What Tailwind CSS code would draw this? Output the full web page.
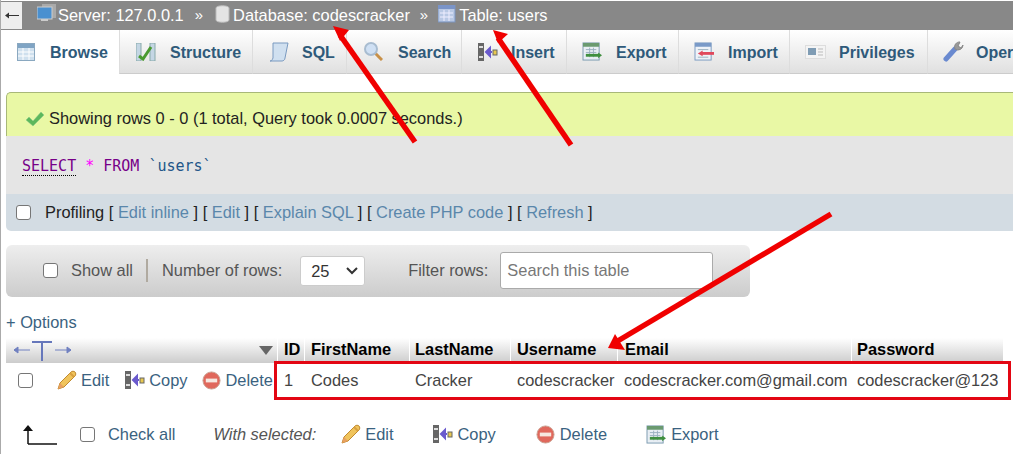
<!DOCTYPE html>
<html lang="en">
<head>
    <meta charset="UTF-8">
    <title>phpMyAdmin - users</title>
    <script src="https://cdn.jsdelivr.net/npm/@tailwindcss/browser@4"></script>
</head>
<body class="bg-white">
    <!-- shared icons -->
    <svg class="hidden">
        <symbol id="i-edit" viewBox="0 0 20 20"><path d="M1 19l2-6L14 2c1-1 3-1 4 0s1 3 0 4L7 17z" fill="#f0c45c" stroke="#c08a30"/><path d="M1 19l2-6 4 4z" fill="#e8a060"/><path d="M13 3l4 4" stroke="#d8a040" stroke-width="2"/></symbol>
        <symbol id="i-copy" viewBox="0 0 20 20"><rect x="0" y="1" width="6" height="18" fill="#666"/><rect x="1" y="4" width="4" height="2" fill="#ddd"/><rect x="1" y="14" width="4" height="2" fill="#ddd"/><path d="M14 10H8M8 10l4-4v8z" fill="#6a5acd" stroke="#6a5acd" stroke-width="2"/><rect x="15" y="8" width="4" height="5" fill="#e8c850" stroke="#666"/></symbol>
        <symbol id="i-del" viewBox="0 0 20 20"><circle cx="10" cy="10" r="9" fill="#e0685c" stroke="#c9a090"/><rect x="4" y="8" width="12" height="4" fill="#f6e8e0"/></symbol>
        <symbol id="i-export" viewBox="0 0 22 20"><rect x="1" y="1" width="17" height="18" fill="#e8eef4" stroke="#7a9ab0"/><rect x="1" y="1" width="17" height="4" fill="#6a9a70"/><path d="M4 8h11M4 11h11M8 6v10M12 6v10" stroke="#9ab0c0"/><path d="M4 14h14" stroke="#3f8f3f" stroke-width="3"/><path d="M17 11l4 3-4 3z" fill="#3f8f3f"/></symbol>
        <symbol id="i-import" viewBox="0 0 22 20"><rect x="1" y="1" width="17" height="18" fill="#eef2f8" stroke="#7a9ac0"/><rect x="1" y="1" width="17" height="4" fill="#7a9ac8"/><path d="M4 8h11M4 16h11" stroke="#9ab0c0"/><path d="M8 12h13" stroke="#e0485c" stroke-width="3"/><path d="M9 9l-5 3 5 3z" fill="#e0485c"/></symbol>
    </svg>

    <div class="relative w-[1013px] h-[454px] overflow-hidden font-['Liberation_Sans',Arial,sans-serif] text-[16.4px] border-l border-[#aaa]">

        <!-- breadcrumb -->
        <div class="mt-px h-[29px] bg-[#888] flex items-center text-white">
            <div class="w-[21px] h-[27px] bg-[#eee] flex items-center justify-center mr-[15px]">
                <svg class="w-[14px] h-[7px]" viewBox="0 0 14 7"><path d="M1 3.500h13" stroke="#333"/><path d="M0 3.500l4-3v6z" fill="#333"/></svg>
            </div>
            <svg class="w-[20px] h-[20px] mb-1" viewBox="0 0 20 20"><rect x="5" y="0" width="14" height="14" fill="#aaa"/><rect x="0" y="3" width="15" height="12" fill="#4a90d0" stroke="#ccc"/><rect x="4" y="15" width="7" height="2" fill="#ccc"/></svg>
            <span class="ml-px">Server: 127.0.0.1</span>
            <span class="ml-[11px] mr-[12px] text-[15px]">»</span>
            <svg class="w-[15px] h-[18px] mb-1" viewBox="0 0 15 18"><path d="M1 3c0-3 13-3 13 0v12c0 3-13 3-13 0z" fill="#e4e4e4" stroke="#bbb"/></svg>
            <span class="ml-[3px]">Database: codescracker</span>
            <span class="ml-[10px] mr-[10px] text-[15px]">»</span>
            <svg class="w-[18px] h-[18px] mb-1" viewBox="0 0 18 18"><rect x="0" y="0" width="17" height="17" fill="#b8c8e4" stroke="#7a94c0"/><rect x="0" y="0" width="17" height="4" fill="#7a94c8"/><path d="M2 8h13M2 12h13M6 5v11M11 5v11" stroke="#eef"/></svg>
            <span class="ml-[3px]">Table: users</span>
        </div>

        <!-- tabs -->
        <div class="flex h-[44px] font-bold text-[16px] text-[#2f5a7a] whitespace-nowrap [&>div>span]:mt-[2px]">
            <div class="w-[118px] bg-white flex items-center pl-[16px] gap-[15px] shrink-0">
                <svg class="w-[18px] h-[18px]" viewBox="0 0 18 18"><rect x="0.5" y="0.5" width="17" height="17" fill="#cfe0ee" stroke="#8aa8c0"/><rect x="1" y="1" width="16" height="4" fill="#7fa4c4"/><path d="M1 9h16M1 13h16M6 5v12M12 5v12" stroke="#fff"/></svg>
                <span>Browse</span>
            </div>
            <div class="w-[133px] shrink-0 border-l border-[#ddd] bg-gradient-to-b from-white to-[#e0e0e0] border-b border-b-[#ccc] flex items-center pl-[16px] gap-[14px]">
                <svg class="w-[20px] h-[18px]" viewBox="0 0 20 18"><rect x="0" y="0" width="5" height="18" fill="#c4d6e4" stroke="#8aa"/><rect x="14" y="0" width="5" height="18" fill="#c4d6e4" stroke="#8aa"/><path d="M3 13l4 3L15 4" fill="none" stroke="#4a9a30" stroke-width="3"/></svg>
                <span>Structure</span>
            </div>
            <div class="w-[94px] shrink-0 border-l border-[#ddd] bg-gradient-to-b from-white to-[#e0e0e0] border-b border-b-[#ccc] flex items-center pl-[16px] gap-[13px]">
                <svg class="w-[20px] h-[20px]" viewBox="0 0 20 20"><path d="M4 1h15l-3 15c0 2-2 3-3 3H1c2 0 2-1 3-3z" fill="#d0e0f0" stroke="#7a9ac0"/></svg>
                <span>SQL</span>
            </div>
            <div class="w-[115px] shrink-0 border-l border-[#ddd] bg-gradient-to-b from-white to-[#e0e0e0] border-b border-b-[#ccc] flex items-center pl-[17px] gap-[15px]">
                <svg class="w-[19px] h-[19px]" viewBox="0 0 19 19"><path d="M11 11l7 7" stroke="#c89048" stroke-width="3"/><circle cx="7" cy="7" r="6" fill="#cfe0f4" stroke="#a8bcd0" stroke-width="2"/></svg>
                <span>Search</span>
            </div>
            <div class="w-[105px] shrink-0 border-l border-[#ddd] bg-gradient-to-b from-white to-[#e0e0e0] border-b border-b-[#ccc] flex items-center pl-[16px] gap-[13px]">
                <svg class="w-[20px] h-[20px]"><use href="#i-copy"/></svg>
                <span>Insert</span>
            </div>
            <div class="w-[112px] shrink-0 border-l border-[#ddd] bg-gradient-to-b from-white to-[#e0e0e0] border-b border-b-[#ccc] flex items-center pl-[15px] gap-[13px]">
                <svg class="w-[21px] h-[19px]"><use href="#i-export"/></svg>
                <span>Export</span>
            </div>
            <div class="w-[111px] shrink-0 border-l border-[#ddd] bg-gradient-to-b from-white to-[#e0e0e0] border-b border-b-[#ccc] flex items-center pl-[15px] gap-[13px]">
                <svg class="w-[21px] h-[19px]"><use href="#i-import"/></svg>
                <span>Import</span>
            </div>
            <div class="w-[138px] shrink-0 border-l border-[#ddd] bg-gradient-to-b from-white to-[#e0e0e0] border-b border-b-[#ccc] flex items-center pl-[15px] gap-[13px]">
                <svg class="w-[21px] h-[14px]" viewBox="0 0 21 14"><rect x="0.5" y="0.5" width="20" height="13" fill="#f4f4f4" stroke="#ddd"/><rect x="3" y="3" width="8" height="7" fill="#7f9cb4"/><path d="M13 4h5M13 7h5M13 10h5" stroke="#bbb"/></svg>
                <span>Privileges</span>
            </div>
            <div class="flex-1 border-l border-[#ddd] bg-gradient-to-b from-white to-[#e0e0e0] border-b border-b-[#ccc] flex items-center pl-[15px] gap-[12px]">
                <svg class="w-[21px] h-[21px] shrink-0" viewBox="0 0 21 21"><path d="M3 18L12 8" stroke="#6a8ad0" stroke-width="5" stroke-linecap="round"/><path d="M12 8a5 5 0 0 1 5-7l-2 4 3 2 2-3a5 5 0 0 1-8 4z" fill="#999" stroke="#888"/></svg>
                <span>Oper</span>
            </div>
        </div>

        <!-- result message + query -->
        <div class="mt-[18px] ml-[5px]">
            <div class="h-[44px] bg-[#e9f8a5] border-t border-l border-[#a8b878] rounded-tl-[5px] flex items-center pt-[8px] pl-[18px] gap-[4px] text-[#222]">
                <svg class="w-[20px] h-[16px]" viewBox="0 0 20 16"><path d="M1 9l3-3 4 4 8-9 3 3L8 15z" fill="#5cb85c" stroke="#8ac88a" stroke-width="0.5"/></svg>
                <span>Showing rows 0 - 0 (1 total, Query took 0.0007 seconds.)</span>
            </div>
            <div class="h-[58px] bg-[#e5e5e5] pl-[16px] pt-[21px] font-['DejaVu_Sans_Mono',monospace] text-[15px] leading-[18px] whitespace-pre"><span class="text-[#770088] border-b border-dotted border-black">SELECT</span> <span class="text-[#ff00ff]">*</span> <span class="text-[#770088]">FROM</span> <span class="text-[#225588]">`users`</span></div>
            <div class="h-[37px] bg-[#d3dce3] rounded-bl-[5px] flex items-center pl-[10px] text-[#222] whitespace-pre">
                <span class="w-[15px] h-[15px] border border-[#767676] rounded-[3px] bg-white mr-[14px] shrink-0"></span>
                <span>Profiling [ <span class="text-[#5a87ab]">Edit inline</span> ] [ <span class="text-[#5a87ab]">Edit</span> ] [ <span class="text-[#5a87ab]">Explain SQL</span> ] [ <span class="text-[#5a87ab]">Create PHP code</span> ] [ <span class="text-[#5a87ab]">Refresh</span> ]</span>
            </div>
        </div>

        <!-- navigation bar -->
        <div class="mt-[14px] ml-[5px] w-[744px] h-[52px] rounded-[6px] bg-gradient-to-b from-[#eee] to-[#ccc] flex items-center text-[#555] whitespace-nowrap [&>span]:mb-[2px]">
            <span class="ml-[37px] w-[15px] h-[15px] border border-[#767676] rounded-[3px] bg-white shrink-0"></span>
            <span class="ml-[13px]">Show all</span>
            <span class="ml-[13px] w-[2px] h-[23px] bg-[#b0aaa0]"></span>
            <span class="ml-[14px]">Number of rows:</span>
            <div class="ml-[18px] w-[65px] h-[30px] bg-white border border-[#ccc] rounded-[3px] flex items-center justify-between pl-[10px] pr-[6px] text-[#333]">
                <span>25</span>
                <svg class="w-[12px] h-[8px]" viewBox="0 0 12 8"><path d="M1 1l5 5 5-5" fill="none" stroke="#333" stroke-width="2"/></svg>
            </div>
            <span class="ml-[43px]">Filter rows:</span>
            <div class="ml-[12px] w-[213px] h-[37px] mb-[1px] bg-white border border-[#aaa] rounded-[3px] flex items-center pl-[6px] text-[#777]">Search this table</div>
        </div>

        <div class="mt-[16px] ml-[5px] h-[19px] leading-[19px] text-[#3a6280]">+ Options</div>

        <!-- table -->
        <div class="mt-[6px] ml-[5px] w-[997px] grid grid-cols-[272px_27px_105px_101px_107px_234px_151px]">
            <div class="h-[25px] bg-gradient-to-b from-white to-[#ccc] flex items-center justify-between pl-[8px] pr-[3px] border-r border-white">
                <svg class="w-[57px] h-[21px]" viewBox="0 0 57 21"><path d="M0 10h16M0 10l4-3v6zM41 10h16M57 10l-4-3v6z" stroke="#7080c0" fill="#7080c0"/><path d="M18 2h20M28 2v19" stroke="#6677bb" stroke-width="2" fill="none"/></svg>
                <svg class="w-[14px] h-[9px] mr-px" viewBox="0 0 14 9"><path d="M0 0h14l-7 9z" fill="#666"/></svg>
            </div>
            <div class="h-[25px] pb-[2px] bg-gradient-to-b from-white to-[#ccc] font-bold text-black flex items-center pl-[6px] border-r border-white">ID</div>
            <div class="h-[25px] pb-[2px] bg-gradient-to-b from-white to-[#ccc] font-bold text-black flex items-center pl-[6px] border-r border-white">FirstName</div>
            <div class="h-[25px] pb-[2px] bg-gradient-to-b from-white to-[#ccc] font-bold text-black flex items-center pl-[5px] border-r border-white">LastName</div>
            <div class="h-[25px] pb-[2px] bg-gradient-to-b from-white to-[#ccc] font-bold text-black flex items-center pl-[6px] border-r border-white">Username</div>
            <div class="h-[25px] pb-[2px] bg-gradient-to-b from-white to-[#ccc] font-bold text-black flex items-center pl-[7px] border-r border-white">Email</div>
            <div class="h-[25px] pb-[2px] bg-gradient-to-b from-white to-[#ccc] font-bold text-black flex items-center pl-[5px]">Password</div>

            <div class="h-[36px] pb-[2px] flex items-center text-[#3a6280] whitespace-nowrap overflow-hidden">
                <span class="ml-[12px] w-[15px] h-[15px] border border-[#767676] rounded-[3px] bg-white shrink-0"></span>
                <svg class="ml-[24px] w-[20px] h-[20px] shrink-0"><use href="#i-edit"/></svg>
                <span class="ml-[4px]">Edit</span>
                <svg class="ml-[16px] w-[20px] h-[20px] shrink-0"><use href="#i-copy"/></svg>
                <span class="ml-[4px]">Copy</span>
                <svg class="ml-[14px] w-[19px] h-[19px] shrink-0"><use href="#i-del"/></svg>
                <span class="ml-[5px]">Delete</span>
            </div>
            <div class="h-[36px] pb-[2px] flex items-center pl-[6px] text-[#444]">1</div>
            <div class="h-[36px] pb-[2px] flex items-center pl-[6px] text-[#444]">Codes</div>
            <div class="h-[36px] pb-[2px] flex items-center pl-[5px] text-[#444]">Cracker</div>
            <div class="h-[36px] pb-[2px] flex items-center pl-[6px] text-[#444]">codescracker</div>
            <div class="h-[36px] pb-[2px] flex items-center pl-[6px] text-[#444]">codescracker.com@gmail.com</div>
            <div class="h-[36px] pb-[2px] flex items-center pl-[5px] text-[#444]">codescracker@123</div>
        </div>

        <!-- bulk actions -->
        <div class="mt-[23px] ml-[21px] flex items-center text-[#3a6280] whitespace-nowrap">
            <svg class="w-[35px] h-[21px] shrink-0" viewBox="0 0 35 21"><path d="M6 20V4" stroke="#111" stroke-width="1.500"/><path d="M1 7l5-6 5 6z" fill="#111"/><path d="M6 20h29" stroke="#111" stroke-width="1.500"/></svg>
            <span class="ml-[23px] w-[15px] h-[15px] border border-[#767676] rounded-[3px] bg-white shrink-0"></span>
            <span class="ml-[13px]">Check all</span>
            <span class="ml-[38px] italic text-[#555]">With selected:</span>
            <svg class="ml-[25px] w-[20px] h-[20px] shrink-0"><use href="#i-edit"/></svg>
            <span class="ml-[4px]">Edit</span>
            <svg class="ml-[40px] w-[20px] h-[20px] shrink-0"><use href="#i-copy"/></svg>
            <span class="ml-[4px]">Copy</span>
            <svg class="ml-[40px] w-[19px] h-[19px] shrink-0"><use href="#i-del"/></svg>
            <span class="ml-[5px]">Delete</span>
            <svg class="ml-[39px] w-[21px] h-[19px] shrink-0"><use href="#i-export"/></svg>
            <span class="ml-[4px]">Export</span>
        </div>

        <!-- red annotations over the screenshot -->
        <div class="absolute left-[273px] top-[361px] w-[737px] h-[39px] border-[3px] border-[#e30613]"></div>
        <svg class="absolute -left-px top-0 pointer-events-none" width="1013" height="454" viewBox="0 0 1013 454">
            <g stroke="#f00000" stroke-width="5.500">
                <path d="M415 142L340 35"/>
                <path d="M571 145L498 38"/>
                <path d="M831 214L616 342"/>
            </g>
            <g fill="#f00000">
                <path d="M333 26l16 4-9 11z"/>
                <path d="M493 30l15 4-10 9z"/>
                <path d="M608 348l7-14 10 16z"/>
            </g>
        </svg>
    </div>
</body>
</html>
